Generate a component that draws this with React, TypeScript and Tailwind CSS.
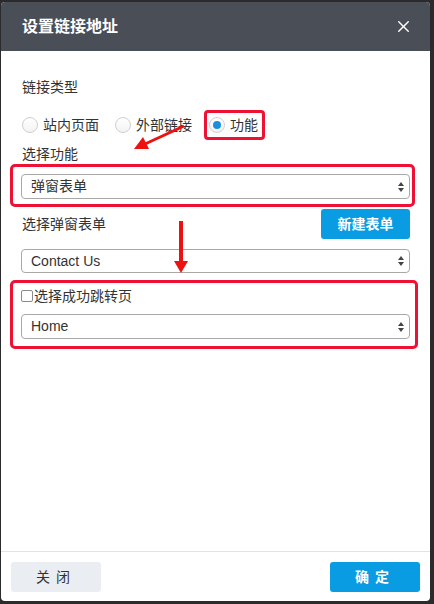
import { X } from "lucide-react";

const font = { fontFamily: '"Liberation Sans", "Noto Sans CJK SC", sans-serif' };

function FakeSelect({ value, h = "h-[25px]" }: { value: string; h?: string }) {
  return (
    <div
      className={`relative flex items-center ${h} rounded-[4px] border border-[#a8a8a8] bg-white pl-[9px] text-[14px] text-[#333]`}
    >
      {value}
      <svg className="absolute right-[4px] top-1/2 -translate-y-1/2" width="8" height="12" viewBox="0 0 8 12">
        <path d="M4 1 L7 5 L1 5 Z" fill="#444" />
        <path d="M4 11 L7 7 L1 7 Z" fill="#444" />
      </svg>
    </div>
  );
}

function Radio({ label, checked = false }: { label: string; checked?: boolean }) {
  return (
    <div className="flex items-center gap-[5px]">
      <span className="flex h-[16px] w-[16px] items-center justify-center rounded-full border border-[#cfcfcf] bg-gradient-to-b from-white to-[#f3f3f3]">
        {checked && <span className="h-[8px] w-[8px] rounded-full bg-[#1a8fe0]" />}
      </span>
      <span className="text-[14px] text-[#333]">{label}</span>
    </div>
  );
}

export default function App() {
  return (
    <div className="w-[434px] h-[604px] bg-[#2b2b2b] pt-[2px] pl-[1px] pr-[4px] pb-[3px]" style={font}>
      <div className="relative flex h-full flex-col overflow-hidden rounded-[4px] bg-white">
        {/* header */}
        <div className="flex h-[49px] shrink-0 items-center justify-between bg-[#4a4e57] pl-[21px] pr-[17px]">
          <span className="text-[16px] font-bold text-white">设置链接地址</span>
          <X className="h-[19px] w-[19px] text-white" strokeWidth={1.8} />
        </div>

        {/* body */}
        <div className="flex flex-1 flex-col px-[20px] pt-[26px]">
          <div className="pl-[1px] text-[14px] leading-[20px] text-[#333]">链接类型</div>

          <div className="mt-[13px] flex h-[30px] items-center">
            <div className="ml-[1px]">
              <Radio label="站内页面" />
            </div>
            <div className="ml-[16px]">
              <Radio label="外部链接" />
            </div>
            <div className="ml-[12px] flex h-[30px] items-center rounded-[4px] border-[3px] border-[#ee1133] pl-[2px] pr-[4px]">
              <Radio label="功能" checked />
            </div>
          </div>

          <div className="mt-[4px] pl-[1px] text-[14px] leading-[20px] text-[#333]">选择功能</div>

          <div className="-ml-[11px] -mr-[5px] rounded-[5px] border-[3px] border-[#ee1133] pl-[8px] pr-[2px] pt-[7px] pb-[5px]">
            <FakeSelect value="弹窗表单" />
          </div>

          <div className="mt-[2px] flex h-[30px] items-center justify-between">
            <span className="pl-[1px] text-[14px] text-[#333]">选择弹窗表单</span>
            <button className="flex h-[30px] w-[89px] items-center justify-center rounded-[3px] bg-[#0a9ce2] text-[14px] font-bold text-white">
              新建表单
            </button>
          </div>

          <div className="mt-[10px]">
            <FakeSelect value="Contact Us" h="h-[24px]" />
          </div>

          <div className="-ml-[11px] -mr-[8px] mt-[7px] rounded-[5px] border-[3px] border-[#ee1133] pl-[8px] pr-[5px] pt-[6px] pb-[7px]">
            <div className="flex h-[14px] items-center">
              <span className="h-[12px] w-[12px] rounded-[2px] border border-[#8a8a8a] bg-white" />
              <span className="ml-[1px] text-[14px] text-[#333]">选择成功跳转页</span>
            </div>
            <div className="mt-[11px]">
              <FakeSelect value="Home" />
            </div>
          </div>
        </div>

        {/* footer */}
        <div className="flex h-[50px] shrink-0 items-start justify-between border-t border-[#e2e2e2] px-[10px] pt-[10px]">
          <button className="flex h-[30px] w-[90px] items-center justify-center rounded-[3px] bg-[#eaedf1] text-[14px] tracking-[6px] text-[#333]">
            关闭
          </button>
          <button className="flex h-[30px] w-[90px] items-center justify-center rounded-[3px] bg-[#0a9ce2] text-[14px] font-bold tracking-[6px] text-white">
            确定
          </button>
        </div>

        {/* annotation arrows */}
        <svg className="pointer-events-none absolute left-0 top-0" width="429" height="599">
          <line x1="183" y1="124" x2="144" y2="142" stroke="#ee1111" strokeWidth="3" />
          <polygon points="133,147 142,135 148,147" fill="#ee1111" />
          <line x1="180" y1="219" x2="180" y2="261" stroke="#ee1111" strokeWidth="4" />
          <polygon points="173,259 187,259 180,271" fill="#ee1111" />
        </svg>
      </div>
    </div>
  );
}
